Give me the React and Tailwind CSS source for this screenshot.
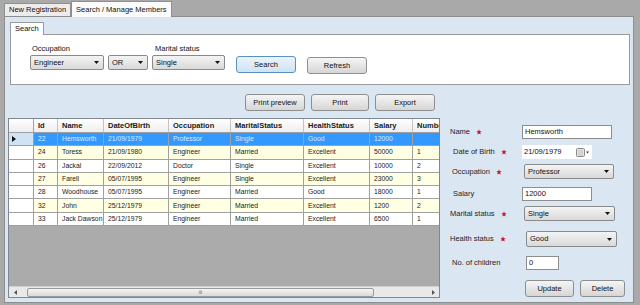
import React from 'react';

const rows = [
  { id: '22', name: 'Hemsworth', dob: '21/09/1979', occ: 'Professor', marital: 'Single', health: 'Good', salary: '12000', num: '' },
  { id: '24', name: 'Toress', dob: '21/09/1980', occ: 'Engineer', marital: 'Married', health: 'Excellent', salary: '50000', num: '1' },
  { id: '26', name: 'Jackal', dob: '22/09/2012', occ: 'Doctor', marital: 'Single', health: 'Excellent', salary: '10000', num: '2' },
  { id: '27', name: 'Farell', dob: '05/07/1995', occ: 'Engineer', marital: 'Single', health: 'Excellent', salary: '23000', num: '3' },
  { id: '28', name: 'Woodhouse', dob: '05/07/1995', occ: 'Engineer', marital: 'Married', health: 'Good', salary: '18000', num: '1' },
  { id: '32', name: 'John', dob: '25/12/1979', occ: 'Engineer', marital: 'Married', health: 'Excellent', salary: '1200', num: '2' },
  { id: '33', name: 'Jack Dawson', dob: '25/12/1979', occ: 'Engineer', marital: 'Married', health: 'Excellent', salary: '6500', num: '1' },
];

const cols = [
  { key: 'id', label: 'Id', w: 'w-[24px]' },
  { key: 'name', label: 'Name', w: 'w-[46px]' },
  { key: 'dob', label: 'DateOfBirth', w: 'w-[65px]' },
  { key: 'occ', label: 'Occupation', w: 'w-[62px]' },
  { key: 'marital', label: 'MaritalStatus', w: 'w-[73px]' },
  { key: 'health', label: 'HealthStatus', w: 'w-[66px]' },
  { key: 'salary', label: 'Salary', w: 'w-[43px]' },
  { key: 'num', label: 'NumberOfChildren', w: 'w-[60px]' },
];

function Arrow() {
  return (
    <svg width="5" height="3" viewBox="0 0 5 3" className="shrink-0">
      <path d="M0 0H5L2.5 3Z" fill="#111" />
    </svg>
  );
}

function Combo({ value, w, h = 'h-[15px]' }) {
  return (
    <div className={`${w} ${h} flex items-center justify-between pl-[3px] pr-[4px] rounded-[2px] border border-[#8a8a8a] bg-gradient-to-b from-[#f4f4f4] to-[#d9d9d9] text-[7.5px] text-[#111]`}>
      <span>{value}</span>
      <Arrow />
    </div>
  );
}

function Button({ label, w, h = 'h-[17px]', focus }) {
  return (
    <div
      className={`${w} ${h} flex items-center justify-center rounded-[3px] border text-[7.5px] text-[#111] ${
        focus
          ? 'border-[#5b8fbf] bg-gradient-to-b from-[#eaf4fc] to-[#cfe3f3]'
          : 'border-[#8e8e8e] bg-gradient-to-b from-[#f5f5f5] to-[#d6d6d6]'
      }`}
    >
      {label}
    </div>
  );
}

function Star() {
  return (
    <svg width="6" height="6" viewBox="0 0 10 10" className="ml-[6px] shrink-0">
      <path d="M5 0.5L6.2 3.6L9.5 3.8L7 5.9L7.8 9.2L5 7.4L2.2 9.2L3 5.9L0.5 3.8L3.8 3.6Z" fill="#c8102e" />
    </svg>
  );
}

function TextBox({ value, w }) {
  return (
    <div className={`${w} h-[14px] flex items-center pl-[2px] bg-white border border-[#8e8e8e] text-[7.5px] text-[#111]`}>
      {value}
    </div>
  );
}

function Grid() {
  return (
    <div className="ml-[3px] mt-[7px] w-[432px] h-[180px] border border-[#7f8790] bg-[#ababab] flex flex-col overflow-hidden">
      <div className="flex h-[14px] shrink-0 bg-gradient-to-b from-white to-[#eeeeee] border-b border-[#a0a0a0]">
        <div className="w-[25px] shrink-0 border-r border-[#a0a0a0]" />
        {cols.map((c) => (
          <div key={c.key} className={`${c.w} shrink-0 pl-[4px] flex items-center border-r border-[#c4c4c4] text-[7.5px] font-bold text-[#1a1a1a] whitespace-nowrap overflow-hidden`}>
            {c.label}
          </div>
        ))}
      </div>
      {rows.map((r, i) => {
        const sel = i === 0;
        const bg = sel ? 'bg-[#3399ff] text-[#d9ecff]' : i % 2 === 1 ? 'bg-[#ffffe3] text-[#222]' : 'bg-white text-[#222]';
        return (
          <div key={r.id} className="flex h-[13.3px] shrink-0">
            <div className={`w-[25px] shrink-0 flex items-center pl-[3px] border-r border-b border-[#a0a0a0] ${sel ? 'bg-[#cfe3f5]' : 'bg-white'}`}>
              {sel && (
                <svg width="4" height="6" viewBox="0 0 4 6">
                  <path d="M0 0L4 3L0 6Z" fill="#111" />
                </svg>
              )}
            </div>
            {cols.map((c) => (
              <div key={c.key} className={`${c.w} shrink-0 pl-[4px] flex items-center border-r border-b border-[#a0a0a0] text-[6.8px] whitespace-nowrap overflow-hidden ${bg}`}>
                {r[c.key]}
              </div>
            ))}
          </div>
        );
      })}
      <div className="flex-1" />
      <div className="h-[11px] shrink-0 flex items-center bg-[#e9e9e9] border-t border-[#d0d0d0]">
        <div className="w-[12px] flex justify-center">
          <svg width="3" height="5" viewBox="0 0 3 5"><path d="M3 0V5L0 2.5Z" fill="#555" /></svg>
        </div>
        <div className="ml-[6px] w-[347px] h-[9px] rounded-[2px] border border-[#9a9a9a] bg-gradient-to-b from-[#f4f4f4] to-[#dadada] flex items-center justify-center text-[5px] text-[#666] leading-none">
          iii
        </div>
        <div className="flex-1" />
        <div className="w-[12px] flex justify-center">
          <svg width="3" height="5" viewBox="0 0 3 5"><path d="M0 0V5L3 2.5Z" fill="#555" /></svg>
        </div>
      </div>
    </div>
  );
}

function Form() {
  return (
    <div className="w-[193px] flex flex-col text-[7.5px] leading-[10px] text-[#222]">
      <div className="mt-[40px] h-[14px] flex items-center">
        <div className="w-[82px] pl-[10px] flex items-center">Name<Star /></div>
        <TextBox value="Hemsworth" w="w-[90px]" />
      </div>
      <div className="mt-[6px] h-[14px] flex items-center">
        <div className="w-[82px] pl-[13px] flex items-center">Date of Birth<Star /></div>
        <div className="w-[70px] h-[14px] flex items-center bg-white pl-[2px] text-[#111]">
          <span>21/09/1979</span>
          <div className="flex-1" />
          <svg width="14" height="9" viewBox="0 0 14 9" className="mr-[2px]">
            <rect x="0.5" y="0.5" width="8" height="8" rx="1" fill="#e4e4e4" stroke="#8a8a8a" />
            <path d="M2 3H7M2 5H7M2 7H7" stroke="#aaa" strokeWidth="0.6" />
            <path d="M10 3.5H13L11.5 5.5Z" fill="#333" />
          </svg>
        </div>
      </div>
      <div className="mt-[5px] h-[15px] flex items-center">
        <div className="w-[84px] pl-[12px] flex items-center">Occupation<Star /></div>
        <Combo value="Professor" w="w-[90px]" />
      </div>
      <div className="mt-[8px] h-[14px] flex items-center">
        <div className="w-[82px] pl-[13px]">Salary</div>
        <TextBox value="12000" w="w-[70px]" />
      </div>
      <div className="mt-[5px] h-[15px] flex items-center">
        <div className="w-[84px] pl-[10px] flex items-center">Marital status<Star /></div>
        <Combo value="Single" w="w-[91px]" />
      </div>
      <div className="mt-[10px] h-[16px] flex items-center">
        <div className="w-[86px] pl-[10px] flex items-center">Health status<Star /></div>
        <Combo value="Good" w="w-[91px]" h="h-[16px]" />
      </div>
      <div className="mt-[9px] h-[14px] flex items-center">
        <div className="w-[86px] pl-[12px]">No. of children</div>
        <TextBox value="0" w="w-[33px]" />
      </div>
      <div className="mt-[10px] flex items-center">
        <div className="w-[85px]" />
        <Button label="Update" w="w-[49px]" />
        <div className="w-[6px]" />
        <Button label="Delete" w="w-[45px]" />
      </div>
    </div>
  );
}

export default function App() {
  return (
    <div className="w-[640px] h-[305px] bg-[#a9a9a9] overflow-hidden flex flex-col" style={{ fontFamily: '"Liberation Sans", Arial, sans-serif' }}>
      <div className="h-[16px] shrink-0 flex items-end pl-[4px]">
        <div className="h-[13px] px-[4px] flex items-center bg-[#ececec] border border-b-0 border-[#8e8f8f] text-[7.5px] text-[#111]">
          New Registration
        </div>
        <div className="h-[16px] -mb-px relative z-10 px-[4px] flex items-center bg-[#fbfbfb] border border-b-0 border-[#8e8f8f] text-[7.5px] text-[#111]">
          Search / Manage Members
        </div>
      </div>
      <div className="ml-[4px] w-[630px] h-[287px] shrink-0 bg-[#dbe6f3] border border-[#8d8d8d] flex flex-col">
        <div className="pl-[5px] pt-[5px]">
          <div className="flex">
            <div className="h-[13px] -mb-px relative z-10 px-[4px] flex items-center bg-white border border-b-0 border-[#9a9a9a] text-[7.5px] text-[#111]">
              Search
            </div>
          </div>
          <div className="w-[620px] h-[51px] bg-white border border-[#9a9a9a] pt-[8px] pl-[19px] flex items-start text-[7.5px] text-[#111]">
            <div className="flex flex-col">
              <div className="h-[12px] pl-[2px]">Occupation</div>
              <Combo value="Engineer" w="w-[74px]" />
            </div>
            <div className="ml-[4px] mt-[12px]">
              <Combo value="OR" w="w-[40px]" />
            </div>
            <div className="ml-[4px] flex flex-col">
              <div className="h-[12px] pl-[3px]">Marital status</div>
              <Combo value="Single" w="w-[73px]" />
            </div>
            <div className="ml-[11px] mt-[13px]">
              <Button label="Search" w="w-[60px]" h="h-[17px]" focus />
            </div>
            <div className="ml-[11px] mt-[14px]">
              <Button label="Refresh" w="w-[60px]" h="h-[17px]" />
            </div>
          </div>
        </div>
        <div className="flex">
          <div className="flex flex-col">
            <div className="mt-[9px] flex pl-[240px] gap-[6px]">
              <Button label="Print preview" w="w-[60px]" />
              <Button label="Print" w="w-[58px]" />
              <Button label="Export" w="w-[60px]" />
            </div>
            <Grid />
          </div>
          <Form />
        </div>
      </div>
    </div>
  );
}
